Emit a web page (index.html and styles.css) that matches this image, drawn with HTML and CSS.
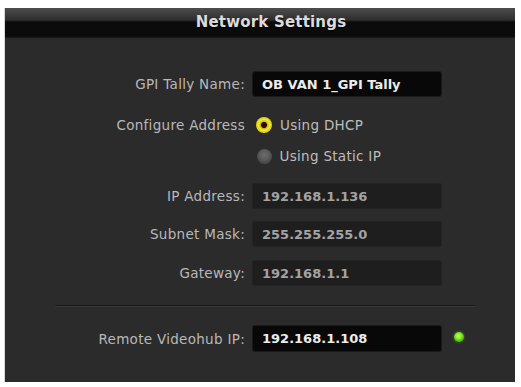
FILE: index.html
```html
<!DOCTYPE html>
<html>
<head>
<meta charset="utf-8">
<link rel="stylesheet" href="styles.css">
</head>
<body>
<div class="panel">
  <div class="titlebar">Network Settings</div>
  <div class="form">
    <div class="row r1">
      <div class="label">GPI Tally Name:</div>
      <div class="field active">OB VAN 1_GPI Tally</div>
    </div>
    <div class="row r2">
      <div class="label">Configure Address</div>
      <div class="option"><span class="radio on"></span><span class="opt-text">Using DHCP</span></div>
    </div>
    <div class="row r3">
      <div class="label"></div>
      <div class="option"><span class="radio off"></span><span class="opt-text">Using Static IP</span></div>
    </div>
    <div class="row r4">
      <div class="label">IP Address:</div>
      <div class="field dim">192.168.1.136</div>
    </div>
    <div class="row r5">
      <div class="label">Subnet Mask:</div>
      <div class="field dim">255.255.255.0</div>
    </div>
    <div class="row r6">
      <div class="label">Gateway:</div>
      <div class="field dim">192.168.1.1</div>
    </div>
    <div class="separator"></div>
    <div class="row r7">
      <div class="label">Remote Videohub IP:</div>
      <div class="field active">192.168.1.108</div>
      <span class="led"></span>
    </div>
  </div>
</div>
</body>
</html>
```
FILE: styles.css
```css
html, body {
  margin: 0;
  padding: 0;
  background: #ffffff;
}
body {
  font-family: "DejaVu Sans", "Liberation Sans", sans-serif;
}
.panel {
  width: 510px;
  height: 374px;
  margin: 8px 0 0 5px;
  background: #2b2b2b;
  box-shadow: -1px 0 0 #d8d8d8, 0 1px 0 #cfcfcf;
}
.titlebar {
  height: 30px;
  line-height: 29px;
  padding-left: 22px;
  text-align: center;
  font-weight: bold;
  font-size: 15px;
  letter-spacing: 0.2px;
  color: #dcdcdc;
  text-shadow: 0 1px 1px #000;
  background: linear-gradient(#4d4d4d 0px, #2e2e2e 12px, #0b0b0b 14px, #0b0b0b 28px, #1c1c1c 30px);
}
.form {
  padding-top: 34px;
}
.row {
  display: flex;
  align-items: center;
  height: 24px;
}
.r2 { margin-top: 17px; }
.r3 { margin-top: 7px; }
.r4 { margin-top: 16px; }
.r5 { margin-top: 14px; }
.r6 { margin-top: 15px; }
.r7 { margin-top: 19px; height: 25px; }
.label {
  width: 240px;
  padding-right: 8px;
  text-align: right;
  font-size: 13.5px;
  color: #b9b9b9;
  letter-spacing: 0.3px;
  white-space: nowrap;
}
.field {
  width: 188px;
  height: 100%;
  box-sizing: border-box;
  padding-left: 9px;
  display: flex;
  align-items: center;
  font-weight: bold;
  font-size: 13px;
  border-radius: 2px;
}
.field.active {
  background: #080808;
  color: #ececec;
  box-shadow: 0 0 0 1px #1a1a1a;
}
.field.dim {
  background: #1e1e1e;
  color: #a3a3a3;
  box-shadow: 0 0 0 1px #232323;
}
.option {
  display: flex;
  align-items: center;
  padding-left: 3px;
}
.radio {
  width: 16px;
  height: 16px;
  border-radius: 50%;
  box-sizing: border-box;
}
.radio.on {
  background: radial-gradient(circle, #3a0800 0, #2a0a00 2.6px, #c9b70c 3.4px, #f0ea2a 5.5px, #d6cc14 8px);
}
.radio.off {
  width: 15px;
  height: 15px;
  margin-left: 0.5px;
  background: radial-gradient(circle at 50% 40%, #6c6c6c 0, #5a5a5a 5px, #4a4a4a 7.5px);
}
.opt-text {
  margin-left: 8px;
  font-size: 13.5px;
  color: #bdbdbd;
  letter-spacing: 0.3px;
}
.separator {
  width: 420px;
  margin: 20px 0 0 50px;
  border-top: 1px solid #1b1b1b;
  border-bottom: 1px solid #383838;
}
.led {
  width: 10px;
  height: 10px;
  margin-left: 13px;
  margin-top: -3px;
  border-radius: 50%;
  background: radial-gradient(circle at 45% 40%, #c6ff6a 0, #8ef02c 2.5px, #52c010 5px);
  box-shadow: 0 0 3px rgba(120, 230, 40, 0.5);
}
```
